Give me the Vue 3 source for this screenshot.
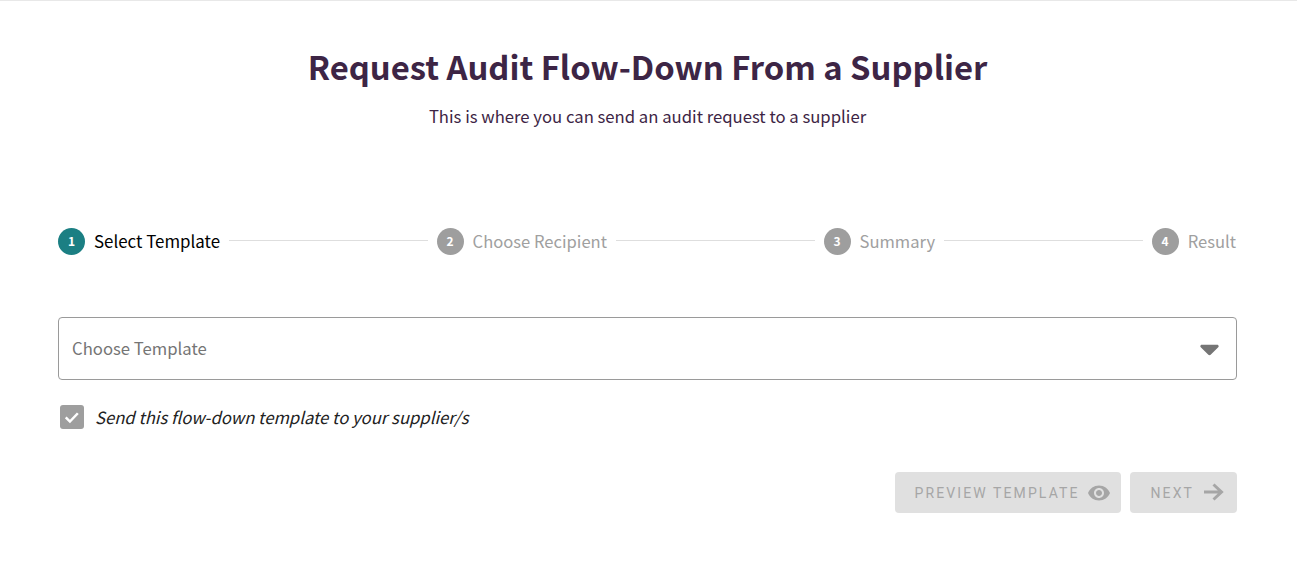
<template>
  <div class="page">
    <header class="head">
      <h1>Request Audit Flow-Down From a Supplier</h1>
      <p>This is where you can send an audit request to a supplier</p>
    </header>

    <div class="stepper">
      <template v-for="(step, i) in steps" :key="step">
        <div class="connector" v-if="i > 0"></div>
        <div class="step" :class="{ active: i === 0 }">
          <span class="step-num">{{ i + 1 }}</span>
          <span class="step-label">{{ step }}</span>
        </div>
      </template>
    </div>

    <div class="select">
      <span class="placeholder">Choose Template</span>
      <svg class="caret" viewBox="0 0 20 12">
        <path d="M2 0.500h16c1.500 0 2.200 1.600 1.200 2.600l-8 8c-.7.700-1.700.700-2.400 0l-8-8C-.2 2.100 .5 .500 2 .500z" />
      </svg>
    </div>

    <label class="check">
      <span class="box">
        <svg viewBox="0 0 24 24" fill="none" stroke="#fff" stroke-width="3">
          <path d="M4.500 12.500l5 5 9.500-10" />
        </svg>
      </span>
      <em>Send this flow-down template to your supplier/s</em>
    </label>

    <div class="actions">
      <button class="btn" disabled>
        PREVIEW TEMPLATE
        <svg viewBox="0 0 24 24" class="eye">
          <path d="M12 4.500C7 4.500 2.730 7.610 1 12c1.730 4.390 6 7.500 11 7.500s9.270-3.110 11-7.500c-1.730-4.390-6-7.500-11-7.500zM12 17c-2.760 0-5-2.240-5-5s2.240-5 5-5 5 2.240 5 5-2.240 5-5 5zm0-8c-1.660 0-3 1.340-3 3s1.340 3 3 3 3-1.340 3-3-1.340-3-3-3z" />
        </svg>
      </button>
      <button class="btn next" disabled>
        NEXT
        <svg viewBox="0 0 24 24" class="arrow" fill="none" stroke="#a6a6a6" stroke-width="3">
          <path d="M3 11h17M12.500 3.500l8 7.500-8 7.500" />
        </svg>
      </button>
    </div>
  </div>
</template>

<script setup>
const steps = ['Select Template', 'Choose Recipient', 'Summary', 'Result']
</script>

<style>
body {
  background: #fff;
}
</style>

<style scoped>
.page {
  box-sizing: border-box;
  height: 565px;
  padding: 0 60px 0 58px;
  border-top: 1px solid #e8e8e8;
  font-family: "Noto Sans CJK SC", "Noto Sans", sans-serif;
}

.head {
  text-align: center;
  padding-top: 42px;
  color: #3d2545;
}

.head h1 {
  margin: 0;
  font-size: 32.8px;
  line-height: 46px;
  font-weight: 700;
}

.head p {
  margin: 16px 0 0;
  font-size: 16.700px;
  line-height: 22px;
}

.stepper {
  display: flex;
  align-items: center;
  margin-top: 100px;
  height: 28px;
  padding-right: 1px;
}

.step {
  display: flex;
  align-items: center;
  gap: 9px;
  color: #a0a0a0;
  font-size: 16.600px;
  line-height: 22px;
  white-space: nowrap;
}

.step.active {
  color: #000;
  font-size: 16.900px;
}

.step-num {
  width: 27px;
  height: 27px;
  border-radius: 50%;
  background: #9e9e9e;
  color: #fff;
  font-size: 12px;
  font-weight: 700;
  display: flex;
  align-items: center;
  justify-content: center;
}

.step.active .step-num {
  background: #1b7f83;
}

.connector {
  flex: 1;
  height: 1px;
  background: #dedede;
  margin: 0 9px;
  transform: translateY(-1px);
}

.select {
  box-sizing: border-box;
  height: 63px;
  margin-top: 62px;
  padding: 0 17px 0 13px;
  border: 1px solid #9a9a9a;
  border-radius: 4px;
  display: flex;
  align-items: center;
  justify-content: space-between;
  color: #757575;
  font-size: 16.700px;
}

.placeholder {
  padding-bottom: 2px;
}

.caret {
  width: 19px;
  height: 12px;
  fill: #757575;
  margin-top: 3px;
}

.check {
  display: flex;
  align-items: center;
  gap: 11px;
  margin-top: 25px;
  padding-left: 2px;
  color: #222;
  font-size: 16.700px;
}

.box {
  width: 24px;
  height: 24px;
  border-radius: 3px;
  background: #9e9e9e;
  display: flex;
  align-items: center;
  justify-content: center;
}

.box svg {
  width: 20px;
  height: 20px;
}

.actions {
  display: flex;
  justify-content: flex-end;
  gap: 9px;
  margin-top: 43px;
}

.btn {
  height: 41px;
  padding: 0 10px 0 20px;
  border: 0;
  border-radius: 4px;
  background: #e0e0e0;
  color: #a6a6a6;
  font-family: Roboto, sans-serif;
  font-size: 14px;
  font-weight: 400;
  letter-spacing: 2.100px;
  display: flex;
  align-items: center;
  gap: 7px;
}

.btn.next {
  padding: 0 12px 0 21px;
}

.btn svg {
  width: 24px;
  height: 24px;
}

.btn .eye {
  fill: #a6a6a6;
}
</style>
